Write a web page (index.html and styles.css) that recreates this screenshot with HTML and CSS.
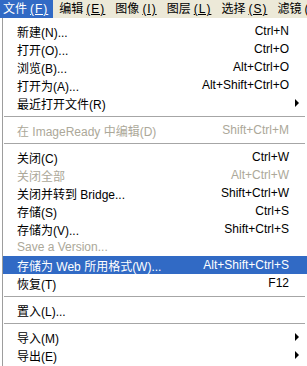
FILE: index.html
```html
<!DOCTYPE html>
<html lang="zh-CN">
<head>
  <meta charset="UTF-8" />
  <title>文件菜单</title>
  <link rel="stylesheet" href="styles.css">
</head>
<body>
  <nav class="menubar">
    <span class="bar-item active">文件<u class="key">(F)</u></span>
    <span class="bar-item">编辑<u class="key">(E)</u></span>
    <span class="bar-item">图像<u class="key">(I)</u></span>
    <span class="bar-item">图层<u class="key">(L)</u></span>
    <span class="bar-item">选择<u class="key">(S)</u></span>
    <span class="bar-item">滤镜<span class="key">(</span></span>
  </nav>

  <ul class="menu">
    <li class="row"><span class="label">新建(N)...</span><span class="keys">Ctrl+N</span><span class="sub"></span></li>
    <li class="row"><span class="label">打开(O)...</span><span class="keys">Ctrl+O</span><span class="sub"></span></li>
    <li class="row"><span class="label">浏览(B)...</span><span class="keys">Alt+Ctrl+O</span><span class="sub"></span></li>
    <li class="row"><span class="label">打开为(A)...</span><span class="keys">Alt+Shift+Ctrl+O</span><span class="sub"></span></li>
    <li class="row"><span class="label">最近打开文件(R)</span><span class="keys"></span><span class="sub"><i class="arrow"></i></span></li>
    <li class="sep"></li>
    <li class="row off"><span class="label">在 ImageReady 中编辑(D)</span><span class="keys">Shift+Ctrl+M</span><span class="sub"></span></li>
    <li class="sep"></li>
    <li class="row"><span class="label">关闭(C)</span><span class="keys">Ctrl+W</span><span class="sub"></span></li>
    <li class="row off"><span class="label">关闭全部</span><span class="keys">Alt+Ctrl+W</span><span class="sub"></span></li>
    <li class="row"><span class="label">关闭并转到 Bridge...</span><span class="keys">Shift+Ctrl+W</span><span class="sub"></span></li>
    <li class="row"><span class="label">存储(S)</span><span class="keys">Ctrl+S</span><span class="sub"></span></li>
    <li class="row"><span class="label">存储为(V)...</span><span class="keys">Shift+Ctrl+S</span><span class="sub"></span></li>
    <li class="row off"><span class="label">Save a Version...</span><span class="keys"></span><span class="sub"></span></li>
    <li class="row hover"><span class="label">存储为 Web 所用格式(W)...</span><span class="keys">Alt+Shift+Ctrl+S</span><span class="sub"></span></li>
    <li class="row"><span class="label">恢复(T)</span><span class="keys">F12</span><span class="sub"></span></li>
    <li class="sep"></li>
    <li class="row"><span class="label">置入(L)...</span><span class="keys"></span><span class="sub"></span></li>
    <li class="sep"></li>
    <li class="row"><span class="label">导入(M)</span><span class="keys"></span><span class="sub"><i class="arrow"></i></span></li>
    <li class="row"><span class="label">导出(E)</span><span class="keys"></span><span class="sub"><i class="arrow"></i></span></li>
  </ul>
</body>
</html>
```

FILE: styles.css
```css
body {
  margin: 0;
  width: 307px;
  height: 366px;
  overflow: hidden;
  background: #fff;
  font-family: "Liberation Sans", "Noto Sans CJK SC", sans-serif;
  font-size: 12px;
  color: #000;
}

.menubar {
  display: flex;
  height: 18px;
  background: #ece9d8;
  white-space: nowrap;
}

.bar-item {
  display: flex;
  align-items: center;
  padding: 0 4px 0 3px;
  margin-right: 3px;
  line-height: 18px;
}

.bar-item.active {
  background: #316ac5;
  color: #fff;
  padding-right: 5px;
  margin-right: 3px;
}

.bar-item .key {
  font-size: 12px;
  margin-left: 3px;
  letter-spacing: 1px;
}

.menu {
  list-style: none;
  margin: 0 0 0 2px;
  padding: 4px 0 0;
  border-left: 1px solid #9d9d9d;
  height: 366px;
  box-sizing: border-box;
}

.row {
  display: grid;
  grid-template-columns: 1fr auto 18px;
  align-items: center;
  height: 18px;
  padding-left: 14px;
  white-space: nowrap;
}

.row.off {
  color: #aca899;
}

.row.hover {
  background: #316ac5;
  color: #fff;
}

.sub {
  display: flex;
  align-items: center;
  height: 18px;
}

.arrow {
  width: 0;
  height: 0;
  margin-left: 6px;
  border-top: 4px solid transparent;
  border-bottom: 4px solid transparent;
  border-left: 4px solid #000;
}

.sep {
  height: 9px;
  margin: 0 2px 0 1px;
  display: flex;
  align-items: center;
}

.sep::before {
  content: "";
  flex: 1;
  height: 1px;
  background: #a6a6a6;
}
```
